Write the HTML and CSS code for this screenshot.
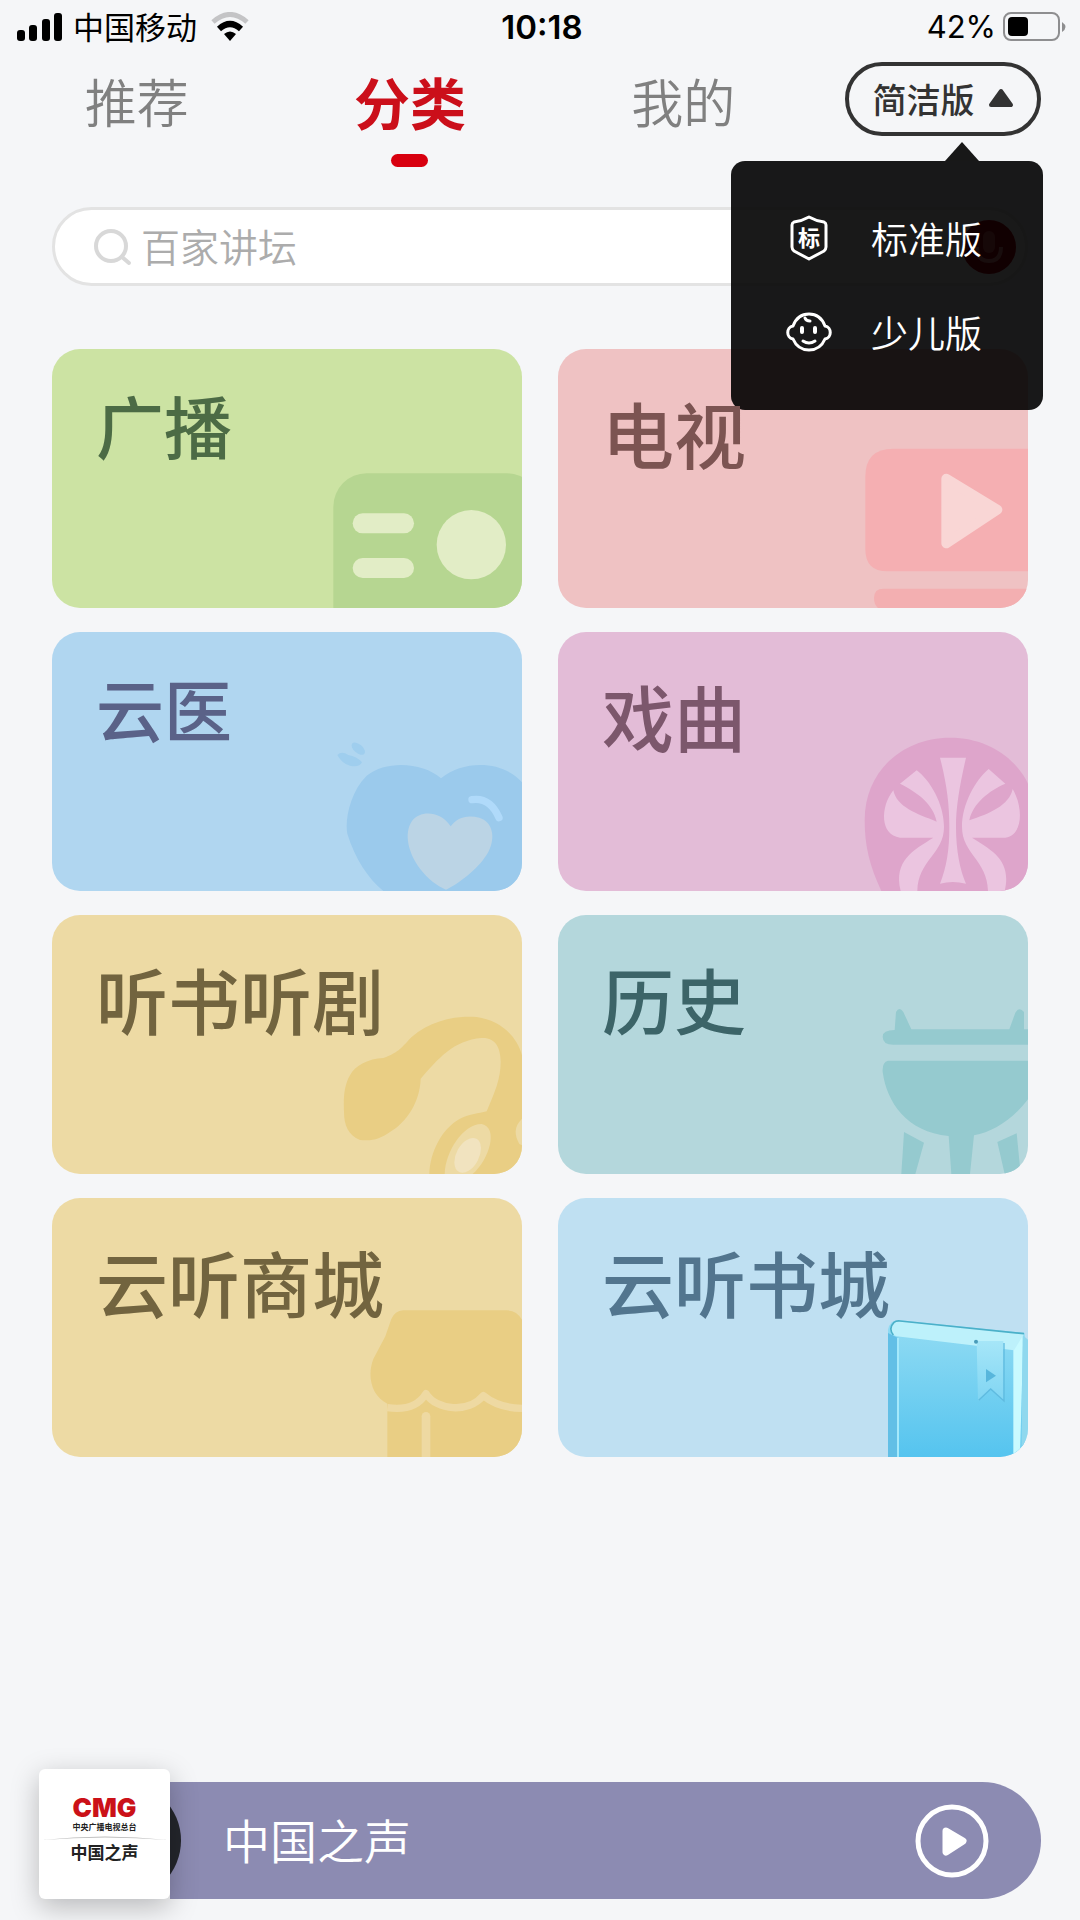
FILE: index.html
```html
<!DOCTYPE html>
<html lang="zh-CN">
<head>
    <meta charset="UTF-8">
    <meta name="viewport" content="width=device-width, initial-scale=1.0">
    <title>云听</title>
    <link rel="stylesheet" href="styles.css">
</head>
<body>
    <div class="status-bar">
        <div class="status-left">
            <svg width="46" height="30" viewBox="0 0 46 30">
                <rect x="0" y="18" width="8" height="11" rx="3"/>
                <rect x="12" y="13" width="8" height="16" rx="3"/>
                <rect x="25" y="7" width="8" height="22" rx="3"/>
                <rect x="37" y="1" width="8" height="28" rx="3"/>
            </svg>
            <span class="carrier">中国移动</span>
            <svg width="38" height="30" viewBox="0 0 38 30">
                <path d="M2 10 Q19 -5 36 10" fill="none" stroke="#c4c4c6" stroke-width="5"/>
                <path d="M8 17 Q19 7 30 17" fill="none" stroke="#000" stroke-width="6"/>
                <path d="M13 22 Q19 17 25 22 L19 29 Z"/>
            </svg>
        </div>
        <span class="time">10:18</span>
        <div class="status-right">
            <span class="percent">42%</span>
            <svg width="64" height="30" viewBox="0 0 64 30">
                <rect x="1" y="1" width="55" height="27" rx="7" fill="none" stroke="#8e8e90" stroke-width="2"/>
                <rect x="5" y="5" width="20" height="19" rx="4"/>
                <path d="M59 10 Q66 15 59 20 Z" fill="#8e8e90"/>
            </svg>
        </div>
    </div>

    <header class="header">
        <nav class="tabs">
            <a class="tab" href="#">推荐</a>
            <a class="tab active" href="#">分类</a>
            <a class="tab" href="#">我的</a>
        </nav>
        <div class="version">
            <button class="version-button" type="button">
                简洁版
                <svg width="26" height="20" viewBox="0 0 26 20">
                    <path d="M13 3 L23 17 H3 Z" fill="#333" stroke="#333" stroke-width="4" stroke-linejoin="round"/>
                </svg>
            </button>
            <div class="version-menu">
                <button class="version-item" type="button">
                    <svg width="46" height="46" viewBox="0 0 46 46">
                        <path d="M23 2 Q30 6 38 7 Q40 8 40 10 V32 Q40 34 38 36 L23 44 L8 36 Q6 34 6 32 V10 Q6 8 8 7 Q16 6 23 2 Z" fill="none" stroke="#fff" stroke-width="3" stroke-linejoin="round"/>
                        <text class="shield-text" x="23" y="31" text-anchor="middle">标</text>
                    </svg>
                    标准版
                </button>
                <button class="version-item" type="button">
                    <svg width="46" height="46" viewBox="0 0 46 46" fill="none" stroke="#fff" stroke-width="3" stroke-linecap="round" stroke-linejoin="round">
                        <path d="M7 17 C10 9 16 5 23 5 C30 5 36 9 39 17 C46 18 46 29 39 30 C36 37 30 41 23 41 C16 41 10 37 7 30 C0 29 0 18 7 17 Z"/>
                        <path d="M19 9 Q20 12 24 12"/>
                        <path d="M17 32 Q23 36 29 32"/>
                        <path d="M16 19 V23 M29 19 V23" stroke-width="4"/>
                    </svg>
                    少儿版
                </button>
            </div>
        </div>
    </header>

    <form class="search">
        <svg width="38" height="38" viewBox="0 0 38 38" fill="none" stroke="#d8d8d8" stroke-width="4" stroke-linecap="round">
            <circle cx="17" cy="18" r="15"/>
            <path d="M28 29 L35 35"/>
        </svg>
        <input type="text" placeholder="百家讲坛" aria-label="搜索">
        <button class="voice" type="button" aria-label="语音">
            <svg width="56" height="56" viewBox="0 0 56 56">
                <circle cx="28" cy="28" r="27" fill="#b0000f"/>
                <path d="M16 28 Q16 42 28 42 Q40 42 40 28" fill="none" stroke="#e88" stroke-width="4"/>
                <rect x="22" y="12" width="12" height="22" rx="6" fill="#d55"/>
            </svg>
        </button>
    </form>

    <main class="cards">
        <a class="card radio" href="#">
            <h2>广播</h2>
            <svg class="art" viewBox="846 356 600 450">
                <rect x="880" y="402" width="620" height="500" rx="100" fill="#b6d691"/>
                <rect x="938" y="522" width="184" height="60" rx="30" fill="#e2edc6"/>
                <rect x="938" y="656" width="184" height="60" rx="30" fill="#e2edc6"/>
                <circle cx="1294" cy="616" r="104" fill="#e2edc6"/>
            </svg>
        </a>
        <a class="card tv" href="#">
            <h2>电视</h2>
            <svg class="art" viewBox="834 356 600 450">
                <path d="M1434 328 H1030 Q946 328 946 412 V630 Q946 696 1012 696 H1434 Z" fill="#f5afb2"/>
                <path d="M1434 748 H1000 Q972 748 972 776 Q972 796 984 806 H1434 Z" fill="#f3afb1"/>
                <path d="M1189 418 L1342 511 L1189 612 Z" fill="#f9d6d5" stroke="#f9d6d5" stroke-width="30" stroke-linejoin="round"/>
            </svg>
        </a>
        <a class="card doctor" href="#">
            <h2>云医</h2>
            <svg class="art" viewBox="846 362 600 450">
                <path d="M1203 474 C1150 426 1040 418 980 466 C930 515 914 600 922 640 C945 715 985 775 1030 812 H1446 V486 C1390 420 1270 418 1203 474 Z" fill="#9bcaec"/>
                <path d="M1232 618 C1200 570 1140 570 1116 602 C1090 640 1106 700 1140 745 C1165 777 1190 795 1218 808 C1265 785 1320 740 1345 695 C1368 650 1358 605 1318 592 C1280 582 1250 592 1232 618 Z" fill="#bbd4e5"/>
                <path d="M1296 538 Q1350 530 1377 592" fill="none" stroke="#b0dafa" stroke-width="22" stroke-linecap="round"/>
                <ellipse cx="955" cy="385" rx="24" ry="13" transform="rotate(40 955 385)" fill="#9fceee"/>
                <path d="M892 404 Q905 390 925 404 Q950 408 966 426 Q958 442 930 436 Q908 432 892 404 Z" fill="#9fceee"/>
            </svg>
        </a>
        <a class="card opera" href="#">
            <h2>戏曲</h2>
            <svg class="art" viewBox="834 362 600 450">
                <path d="M994 812 C960 740 944 680 944 600 C944 450 1060 352 1200 352 C1310 352 1395 410 1434 490 V812 Z" fill="#dea5cb"/>
                <g fill="#ebc5e0">
                    <path d="M1170 412 H1248 C1228 500 1218 560 1218 620 C1218 690 1230 750 1248 790 Q1208 780 1170 790 C1190 740 1198 690 1198 620 C1198 550 1190 490 1170 412 Z"/>
                    <path d="M1050 490 L1100 450 C1140 480 1182 550 1182 620 C1182 700 1104 720 1102 812 H1052 C1030 720 1090 690 1150 652 H1050 C990 645 990 560 1030 510 C1040 560 1100 580 1160 604 C1150 550 1100 515 1050 490 Z"/>
                    <path d="M1366 490 L1316 446 C1276 480 1236 550 1236 620 C1236 700 1312 720 1314 812 H1364 C1386 720 1326 690 1266 652 H1366 C1420 645 1420 560 1388 506 C1378 555 1318 580 1258 600 C1268 550 1318 510 1366 490 Z"/>
                </g>
            </svg>
        </a>
        <a class="card book" href="#">
            <h2>听书听剧</h2>
            <svg class="art" viewBox="846 356 600 450">
                <path d="M930 510 C945 480 985 460 1030 458 C1080 440 1085 425 1115 395 C1170 345 1250 330 1310 335 C1380 345 1430 390 1446 450 V806 H1168 C1170 740 1205 670 1260 640 C1290 625 1315 625 1340 618 C1365 560 1382 520 1382 470 C1382 425 1365 396 1325 398 C1240 405 1195 460 1142 520 C1140 590 1100 650 1050 680 C1020 700 1000 708 960 704 C925 690 912 660 912 620 C910 580 912 540 930 510 Z" fill="#e9ce84"/>
                <path d="M1214 806 C1215 740 1270 655 1325 656 C1375 665 1350 760 1298 806 Z" fill="#eddaa4"/>
                <ellipse cx="1283" cy="750" rx="34" ry="56" transform="rotate(28 1283 750)" fill="#f1e3bf"/>
                <path d="M1446 640 C1420 665 1424 690 1438 716 L1446 720 Z" fill="#eddaa4"/>
            </svg>
        </a>
        <a class="card history" href="#">
            <h2>历史</h2>
            <svg class="art" viewBox="834 356 600 450">
                <g fill="#95cacf">
                    <path d="M1434 372 H1422 V320 Q1408 302 1396 322 L1378 372 H1084 L1060 320 Q1048 302 1038 320 L1034 374 Q998 374 998 394 Q998 418 1030 418 H1434 Z"/>
                    <path d="M1434 466 H1014 Q996 470 998 500 C1010 590 1070 680 1196 692 L1204 806 H1260 L1272 690 C1330 680 1390 640 1434 582 Z"/>
                    <path d="M1062 680 L1122 712 L1096 806 H1054 Z"/>
                    <path d="M1342 710 L1400 684 L1412 806 H1364 Z"/>
                </g>
            </svg>
        </a>
        <a class="card shop" href="#">
            <h2>云听商城</h2>
            <svg class="art" viewBox="846 362 600 450">
                <path d="M1446 400 Q1430 372 1400 372 H1090 Q1064 374 1054 398 L1036 450 L1000 518 C980 570 995 630 1042 652 V812 H1446 Z" fill="#e9ce84"/>
                <path d="M1042 664 Q1125 676 1158 622 C1190 672 1285 682 1330 628 Q1375 665 1446 666" fill="none" stroke="#eed9a2" stroke-width="22" stroke-linejoin="round"/>
                <path d="M1158 812 V690" fill="none" stroke="#eed9a2" stroke-width="26" stroke-linecap="round"/>
            </svg>
        </a>
        <a class="card store" href="#">
            <h2>云听书城</h2>
            <svg class="art" viewBox="834 362 600 450">
                <defs>
                    <linearGradient id="cover" x1="0" y1="0" x2="0" y2="1">
                        <stop offset="0" stop-color="#93dcf3"/>
                        <stop offset="1" stop-color="#55c4ef"/>
                    </linearGradient>
                    <linearGradient id="ribbon" x1="0" y1="0" x2="0" y2="1">
                        <stop offset="0" stop-color="#a6e6f8"/>
                        <stop offset="1" stop-color="#80d5f3"/>
                    </linearGradient>
                </defs>
                <path d="M1014 430 Q1020 400 1050 402 L1424 440 V812 H1014 Z" fill="url(#cover)"/>
                <path d="M1014 440 L1044 455 V812 H1014 Z" fill="#62bfe6"/>
                <path d="M1044 455 V812" stroke="#a5e9fb" stroke-width="6"/>
                <path d="M1390 480 L1420 444 L1410 812 H1390 Z" fill="#c9faff"/>
                <path d="M1418 446 L1434 460 V770 L1414 790 Z" fill="#8fd8ee"/>
                <path d="M1042 404 L1422 442 L1392 492 L1040 450 Q1018 444 1022 424 Q1026 404 1042 404 Z" fill="#bdf1fb"/>
                <path d="M1030 446 Q1014 426 1032 408 Q1038 403 1050 404 L1422 442" fill="none" stroke="#4bb0c9" stroke-width="5"/>
                <path d="M1280 464 H1360 V644 L1322 608 L1284 644 Z" fill="url(#ribbon)"/>
                <path d="M1362 470 V644 L1322 608 L1286 642" fill="none" stroke="#5fbbe0" stroke-width="4"/>
                <path d="M1308 548 L1338 568 L1308 588 Z" fill="#58b6dc"/>
                <circle cx="1278" cy="466" r="6" fill="#4a9cba"/>
            </svg>
        </a>
    </main>

    <footer class="player">
        <div class="cover">
            <strong class="cmg">CMG</strong>
            <span class="org">中央广播电视总台</span>
            <svg width="126" height="6" viewBox="0 0 126 6">
                <path d="M0 5 Q63 -2 126 5 Q63 0 0 5 Z" fill="#bbb"/>
            </svg>
            <span class="channel">中国之声</span>
        </div>
        <div class="player-bar">
            <span class="player-title">中国之声</span>
            <button class="play" type="button" aria-label="播放">
                <svg width="74" height="74" viewBox="0 0 74 74">
                    <circle cx="37" cy="37" r="34" fill="none" stroke="#fff" stroke-width="5"/>
                    <path d="M31 27 L48 37 L31 48 Z" fill="#fff" stroke="#fff" stroke-width="7" stroke-linejoin="round"/>
                </svg>
            </button>
        </div>
    </footer>
</body>
</html>
```
FILE: styles.css
```css
* { box-sizing: border-box; }
body { margin: 0; min-height: 100vh; display: flex; flex-direction: column; background: #f5f6f8; font-family: "Noto Sans CJK SC", sans-serif; }
a { text-decoration: none; }
button { border: none; background: none; padding: 0; font-family: inherit; cursor: pointer; }
svg { display: block; flex: none; }
h2 { margin: 0; }

.status-bar { display: grid; grid-template-columns: 1fr auto 1fr; align-items: center; height: 54px; padding: 0 13px 0 17px; color: #000; }
.status-left, .status-right { display: flex; align-items: center; }
.status-right { justify-content: flex-end; gap: 7px; }
.carrier { margin: 0 14px 0 10px; padding-bottom: 2px; font-size: 31px; line-height: 40px; }
.time { font-family: Inter, sans-serif; font-size: 33px; font-weight: 600; line-height: 40px; }
.percent { font-family: Inter, sans-serif; font-size: 31px; line-height: 40px; }

.header { display: flex; align-items: flex-start; gap: 25px; padding: 8px 39px 0 0; }
.tabs { flex: 1; display: grid; grid-template-columns: repeat(3, 1fr); }
.tab { display: flex; flex-direction: column; align-items: center; font-size: 52px; font-weight: 350; line-height: 78px; color: #808080; }
.tab.active { font-size: 56px; font-weight: 700; color: #cb0f1a; }
.tab.active::after { content: ""; width: 37px; height: 13px; margin-top: 14px; border-radius: 7px; background: #d8000f; }

.version { position: relative; }
.version-button { display: flex; align-items: center; justify-content: center; gap: 13px; width: 196px; height: 74px; padding-bottom: 2px; border: 4px solid #333; border-radius: 37px; font-size: 34px; font-weight: 500; color: #333; }
.version-menu { position: absolute; top: 99px; right: -2px; z-index: 1; width: 312px; padding: 30px 0 31px; border-radius: 14px; background: rgba(0, 0, 0, 0.9); }
.version-menu::before { content: ""; position: absolute; top: -19px; right: 64px; border: 17px solid transparent; border-top: none; border-bottom: 19px solid #181818; }
.version-item { display: flex; align-items: center; gap: 39px; width: 100%; height: 94px; padding-left: 55px; font-size: 37px; font-weight: 350; color: #fff; }
.shield-text { font-size: 22px; font-weight: 700; fill: #fff; }

.search { display: flex; align-items: center; height: 79px; margin: 40px 52px 0; padding: 0 8px 0 39px; border: 3px solid #e3e3e3; border-radius: 40px; background: #fff; }
.search input { flex: 1; min-width: 0; margin-left: 9px; padding: 0 0 4px; border: none; outline: none; background: none; font-family: inherit; font-size: 39px; font-weight: 350; }
.search input::placeholder { color: #acacac; opacity: 1; }

.cards { display: grid; grid-template-columns: 1fr 1fr; gap: 24px 36px; margin: 63px 52px 40px; }
.card { position: relative; overflow: hidden; height: 259px; padding: 45px 44px; border-radius: 28px; }
.card h2 { position: relative; z-index: 1; font-size: 72px; font-weight: 500; line-height: 76px; }
.art { position: absolute; right: 0; bottom: 0; width: 200px; height: 150px; overflow: visible; }
.radio { background: #cce3a3; color: #4c6b45; }
.tv { background: #efc2c3; color: #7c5452; }
.doctor { background: #b0d6f0; color: #5a6288; }
.radio, .doctor { padding-top: 38px; }
.radio h2, .doctor h2 { font-size: 68px; }
.opera { background: #e3bcd7; color: #7c576c; }
.book, .shop { background: #eddaa4; color: #72643f; }
.history { background: #b4d7dc; color: #3c6468; }
.store { background: #bfe0f2; color: #52758e; }

.player { display: flex; align-items: flex-end; margin: auto 39px 21px; }
.cover { position: relative; z-index: 1; display: flex; flex-direction: column; align-items: center; width: 131px; height: 130px; padding-top: 24px; border-radius: 6px; background: #fff; box-shadow: 0 8px 28px rgba(0, 0, 0, 0.25); color: #222; }
.cmg { font-family: Inter, sans-serif; font-size: 26px; font-weight: 900; line-height: 30px; color: #cb1118; }
.org { font-size: 8px; font-weight: 700; line-height: 8px; }
.cover svg { margin: 4px 0 2px; }
.channel { font-size: 17px; font-weight: 700; line-height: 18px; }
.player-bar { position: relative; flex: 1; display: flex; align-items: center; justify-content: space-between; height: 117px; padding: 0 52px 0 53px; border-radius: 0 59px 59px 0; background: #8c8bb2; }
.player-bar::before { content: ""; position: absolute; left: -106px; top: 0; width: 117px; height: 117px; border-radius: 50%; background: #24262c; }
.player-title { padding-bottom: 4px; font-size: 47px; font-weight: 350; line-height: 64px; color: #fff; }
```
